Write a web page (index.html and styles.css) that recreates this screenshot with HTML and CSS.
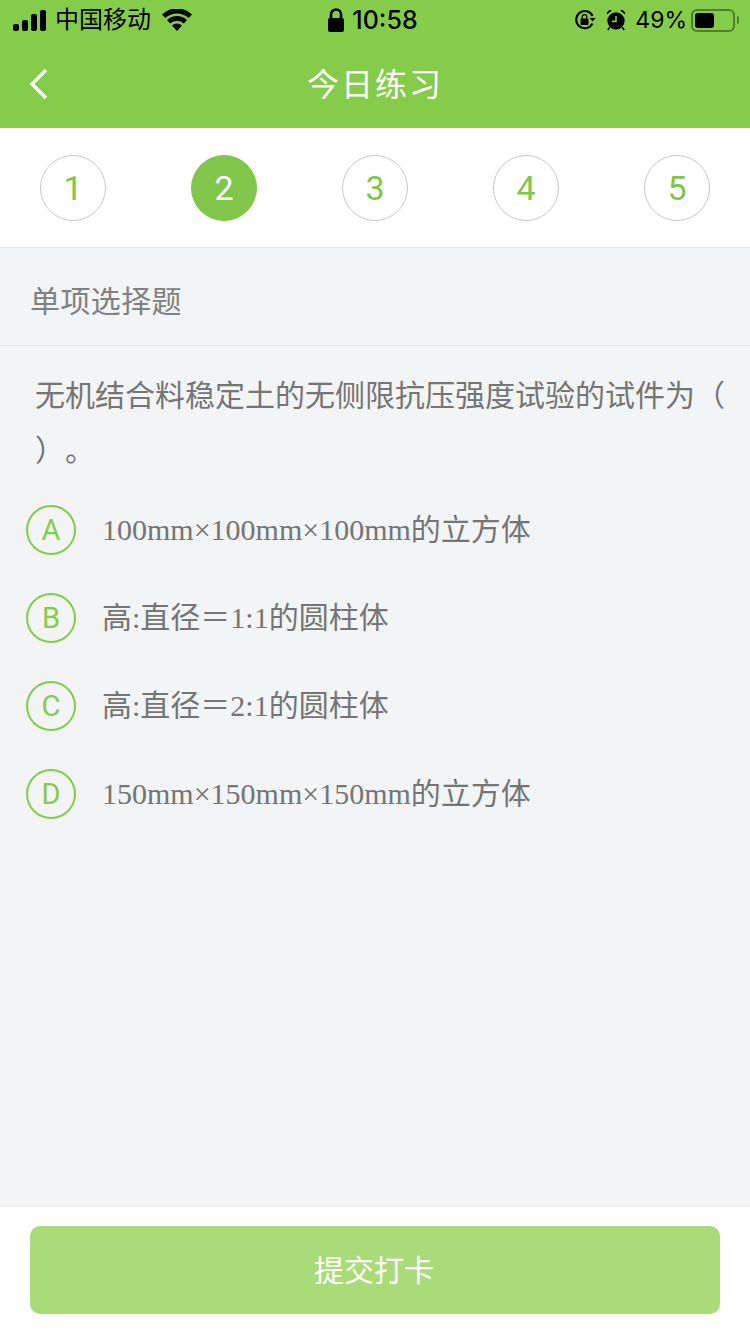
FILE: index.html
```html
<!DOCTYPE html>
<html lang="zh-CN">
<head>
    <meta charset="UTF-8">
    <meta name="viewport" content="width=device-width, initial-scale=1.0">
    <title>今日练习</title>
    <link rel="stylesheet" href="styles.css">
</head>
<body>

<div class="page">
    <div class="top">
        <div class="status">
            <div class="status-left">
                <svg class="signal" width="34" height="21" viewBox="0 0 34 21">
                    <rect x="0" y="14" width="6" height="7" rx="2"/>
                    <rect x="9" y="10" width="6" height="11" rx="2"/>
                    <rect x="18" y="4" width="6" height="17" rx="2"/>
                    <rect x="27" y="0" width="6" height="21" rx="2"/>
                </svg>
                <span class="carrier">中国移动</span>
                <svg class="wifi" width="30" height="22" viewBox="0 0 30 22">
                    <path d="M15 22 L10 16.4 A7.4 7.4 0 0 1 20 16.4 Z"/>
                    <path d="M8.2 14.4 L5 11 A14.5 14.5 0 0 1 25 11 L21.8 14.4 A10 10 0 0 0 8.2 14.4 Z"/>
                    <path d="M3.4 9 L0 5.4 A21.5 21.5 0 0 1 30 5.4 L26.6 9 A17 17 0 0 0 3.4 9 Z"/>
                </svg>
            </div>
            <div class="status-center">
                <svg class="lock" width="18" height="25" viewBox="0 0 18 25">
                    <path d="M4 11 V6.5 A5 5 0 0 1 14 6.5 V11" fill="none" stroke="#000" stroke-width="2.6"/>
                    <rect x="1" y="10" width="16" height="14" rx="2"/>
                </svg>
                <span class="time">10:58</span>
            </div>
            <div class="status-right">
                <svg width="22" height="22" viewBox="0 0 22 22">
                    <path d="M18.5 14.5 A8.6 8.6 0 1 1 18.6 7" fill="none" stroke="#000" stroke-width="2"/>
                    <path d="M15.6 9 H21.6 L18.6 12.6 Z"/>
                    <rect x="6.5" y="9.5" width="8" height="6.5" rx="1"/>
                    <path d="M8.2 10 V8 A2.3 2.3 0 0 1 12.8 8 V10" fill="none" stroke="#000" stroke-width="1.3"/>
                </svg>
                <svg class="alarm" width="20" height="22" viewBox="0 0 22 24">
                    <circle cx="11" cy="13" r="9.5"/>
                    <path d="M1 6 A4 4 0 0 1 6.5 1.5 Z M21 6 A4 4 0 0 0 15.5 1.5 Z"/>
                    <path d="M4 20 L2 23 M18 20 L20 23" stroke="#000" stroke-width="1.6"/>
                    <path d="M11 7.5 V13.5 H6.5" fill="none" stroke="#86cc4b" stroke-width="1.7"/>
                </svg>
                <span class="battery-text">49%</span>
                <div class="battery"><div class="battery-level"></div></div>
                <div class="battery-tip"></div>
            </div>
        </div>
        <div class="nav">
            <svg class="back" width="20" height="32" viewBox="0 0 20 32">
                <path d="M17 2 L3 16 L17 30" fill="none" stroke="#fff" stroke-width="3.4"/>
            </svg>
            <h1 class="nav-title">今日练习</h1>
        </div>
    </div>

    <div class="steps">
        <div class="step">1</div>
        <div class="step active">2</div>
        <div class="step">3</div>
        <div class="step">4</div>
        <div class="step">5</div>
    </div>

    <div class="main">
        <div class="type">单项选择题</div>
        <div class="question">无机结合料稳定土的无侧限抗压强度试验的试件为（ ）。</div>
        <div class="options">
            <div class="option"><div class="letter">A</div><div class="option-text">100mm×100mm×100mm的立方体</div></div>
            <div class="option"><div class="letter">B</div><div class="option-text">高:直径＝1:1的圆柱体</div></div>
            <div class="option"><div class="letter">C</div><div class="option-text">高:直径＝2:1的圆柱体</div></div>
            <div class="option"><div class="letter">D</div><div class="option-text">150mm×150mm×150mm的立方体</div></div>
        </div>
    </div>

    <div class="footer">
        <button class="submit">提交打卡</button>
    </div>
</div>

</body>
</html>
```

FILE: styles.css
```css
* {
    box-sizing: border-box;
}
body {
    margin: 0;
    font-family: "Noto Sans CJK SC", Roboto, sans-serif;
    background-color: #f2f4f6;
}
.page {
    width: 750px;
    height: 1334px;
    display: flex;
    flex-direction: column;
    overflow: hidden;
}
.top {
    height: 128px;
    background-color: #86cc4b;
}
.status {
    height: 40px;
    display: flex;
    align-items: center;
    color: #000;
}
.status svg {
    display: block;
    fill: #000;
}
.status-left {
    flex: 1;
    display: flex;
    align-items: center;
    padding-left: 13px;
}
.carrier {
    font-size: 24px;
    line-height: 30px;
    padding-bottom: 4px;
    margin-left: 8px;
}
.wifi {
    margin-left: 11px;
}
.status-center {
    display: flex;
    align-items: center;
    gap: 7px;
    margin-left: -7px;
}
.time {
    font-family: Inter, Roboto, sans-serif;
    font-size: 25px;
    font-weight: 500;
}
.status-right {
    flex: 1;
    display: flex;
    align-items: center;
    justify-content: flex-end;
    padding-right: 11px;
}
.alarm {
    margin-left: 10px;
}
.battery-text {
    font-family: Inter, Roboto, sans-serif;
    font-size: 23px;
    margin-left: 9px;
}
.battery {
    width: 44px;
    height: 23px;
    margin-left: 4px;
    padding: 2px;
    border: 2px solid #4f7f2c;
    border-radius: 6px;
}
.battery-level {
    width: 19px;
    height: 100%;
    background-color: #000;
    border-radius: 3px;
}
.battery-tip {
    width: 2px;
    height: 8px;
    margin-left: 2px;
    background-color: #4f7f2c;
    border-radius: 0 2px 2px 0;
}
.nav {
    height: 88px;
    padding-bottom: 4px;
    display: flex;
    align-items: center;
    justify-content: center;
    position: relative;
}
.back {
    position: absolute;
    left: 29px;
    top: 28px;
}
.nav-title {
    margin: 0;
    font-size: 32px;
    font-weight: 400;
    letter-spacing: 2px;
    color: #fff;
}
.steps {
    height: 120px;
    padding: 0 40px;
    display: flex;
    align-items: center;
    justify-content: space-between;
    background-color: #fff;
    border-bottom: 1px solid #e6e6e6;
}
.step {
    width: 66px;
    height: 66px;
    border: 1px solid #c8c8c8;
    border-radius: 50%;
    display: flex;
    align-items: center;
    justify-content: center;
    font-family: Roboto, sans-serif;
    font-size: 34px;
    color: #7fc64a;
}
.step.active {
    background-color: #7fc64a;
    border-color: #7fc64a;
    color: #fff;
}
.main {
    flex: 1;
}
.type {
    height: 98px;
    padding: 4px 0 0 30px;
    display: flex;
    align-items: center;
    font-size: 30px;
    letter-spacing: 0.4px;
    color: #808080;
    border-bottom: 1px solid #e6e8ea;
}
.question {
    padding: 20px 24px 0 35px;
    font-size: 30px;
    line-height: 55px;
    color: #757575;
    text-spacing-trim: space-all;
}
.options {
    margin-top: 10px;
    padding-left: 26px;
}
.option {
    height: 88px;
    display: flex;
    align-items: center;
}
.letter {
    width: 50px;
    height: 50px;
    border: 2px solid #86cc4b;
    border-radius: 50%;
    display: flex;
    align-items: center;
    justify-content: center;
    font-family: Roboto, sans-serif;
    font-size: 29px;
    color: #86cc4b;
}
.option-text {
    margin-left: 26px;
    padding-bottom: 6px;
    font-family: "Liberation Serif", "Noto Sans CJK SC", serif;
    font-size: 30px;
    color: #757575;
}
.footer {
    height: 128px;
    padding: 19px 30px;
    background-color: #fff;
    border-top: 1px solid #e9e9e9;
}
.submit {
    width: 100%;
    height: 88px;
    padding: 0 2px 4px 0;
    border: none;
    border-radius: 10px;
    background-color: #a9dc78;
    color: #fff;
    font-family: "Noto Sans CJK SC", sans-serif;
    font-size: 30px;
}
```
